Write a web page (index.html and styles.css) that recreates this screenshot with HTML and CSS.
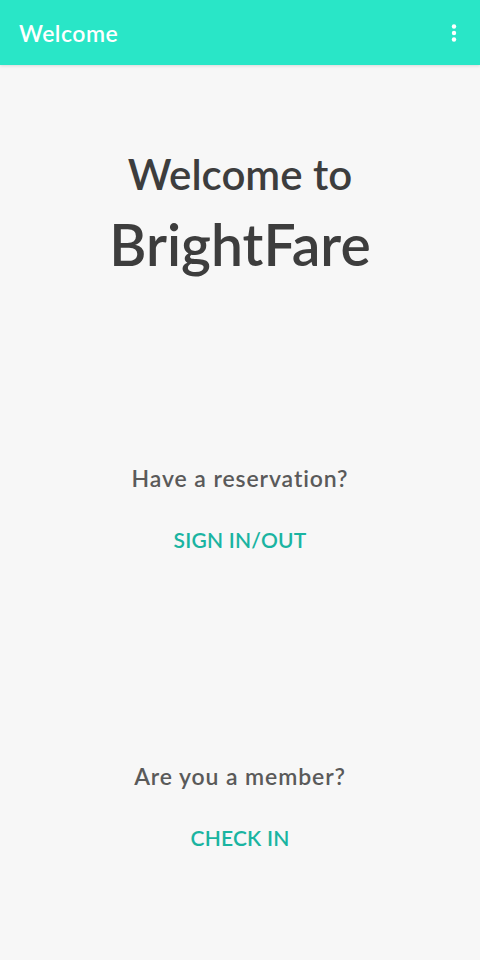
FILE: index.html
```html
<!DOCTYPE html>
<html lang="en">
<head>
  <meta charset="UTF-8" />
  <meta name="viewport" content="width=device-width, initial-scale=1.0"/>
  <title>Welcome</title>
  <link rel="stylesheet" href="styles.css">
</head>
<body>
  <header class="app-bar">
    <span class="app-title">Welcome</span>
    <button class="menu-btn" aria-label="More options">
      <svg width="6" height="18" viewBox="0 0 6 18">
        <circle cx="3" cy="2.5" r="2.2" fill="#fff"/>
        <circle cx="3" cy="9" r="2.2" fill="#fff"/>
        <circle cx="3" cy="15.5" r="2.2" fill="#fff"/>
      </svg>
    </button>
  </header>

  <main class="content">
    <div class="hero">
      <h1 class="hero-line">Welcome to</h1>
      <h2 class="hero-brand">BrightFare</h2>
    </div>

    <section class="action">
      <p class="action-question">Have a reservation?</p>
      <button class="action-link">SIGN IN/OUT</button>
    </section>

    <section class="action">
      <p class="action-question">Are you a member?</p>
      <button class="action-link">CHECK IN</button>
    </section>
  </main>
</body>
</html>
```

FILE: styles.css
```css
body {
  margin: 0;
  font-family: Lato, "Open Sans", sans-serif;
  background: #f7f7f7;
  width: 480px;
  height: 960px;
  overflow: hidden;
}
.app-bar {
  height: 65px;
  background: #29e6c7;
  display: flex;
  align-items: center;
  justify-content: space-between;
  padding: 0 20px 0 19px;
  box-shadow: 0 1px 3px rgba(0,0,0,0.12);
  position: relative;
}
.app-title {
  color: #fff;
  font-size: 23px;
  font-weight: 600;
  letter-spacing: 0.5px;
}
.menu-btn {
  background: none;
  border: 0;
  padding: 0;
  display: flex;
  margin-right: 3px;
}
.content {
  display: flex;
  flex-direction: column;
  align-items: center;
}
.hero {
  margin-top: 83px;
  text-align: center;
  color: #3d3d3d;
}
.hero-line {
  margin: 0;
  font-size: 42px;
  font-weight: 600;
  line-height: 52px;
}
.hero-brand {
  margin: 12px 0 0;
  font-size: 57px;
  font-weight: 600;
  line-height: 64px;
}
.action {
  display: flex;
  flex-direction: column;
  align-items: center;
}
.action:first-of-type {
  margin-top: 187px;
}
.action + .action {
  margin-top: 206px;
}
.action-question {
  margin: 0;
  color: #5a5a5a;
  font-size: 23px;
  font-weight: 600;
  letter-spacing: 0.9px;
  line-height: 30px;
}
.action-link {
  margin-top: 32px;
  background: none;
  border: 0;
  padding: 0;
  font-family: inherit;
  color: #1ab4a1;
  font-size: 21px;
  font-weight: 600;
  letter-spacing: 0.2px;
  line-height: 30px;
  cursor: pointer;
}
```
